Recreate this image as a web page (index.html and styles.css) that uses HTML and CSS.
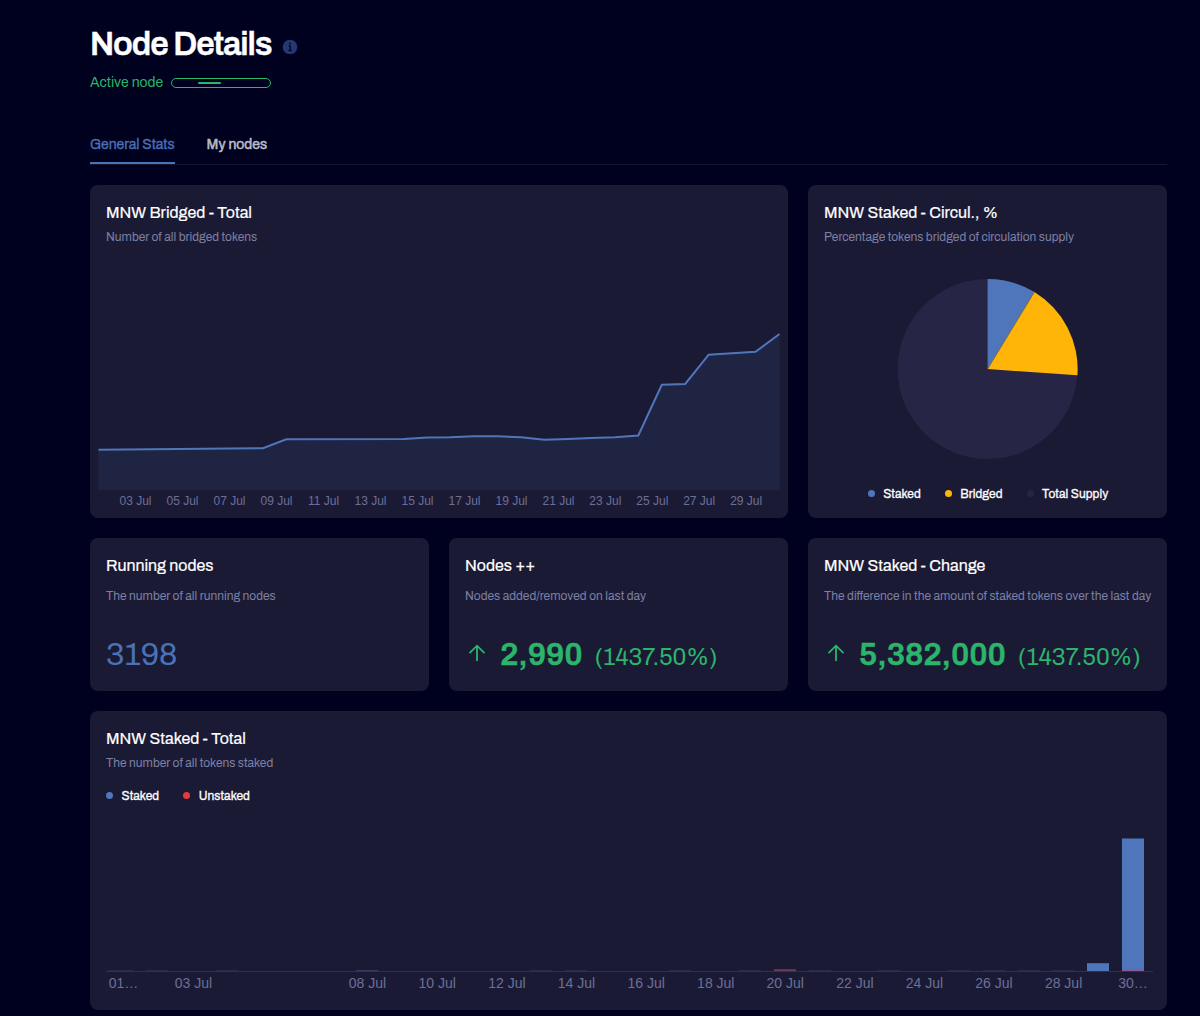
FILE: index.html
```html
<!DOCTYPE html>
<html lang="en">
<head>
  <meta charset="UTF-8">
  <meta name="viewport" content="width=device-width, initial-scale=1.0">
  <title>Node Details</title>
  <link rel="stylesheet" href="styles.css">
</head>
<body>
  <main class="container">
    <header class="page-header">
      <h1>Node Details</h1>
      <svg class="info-icon" width="16" height="16" viewBox="0 0 16 16">
        <circle cx="8" cy="8" r="7.3" fill="#263872"/>
        <circle cx="8" cy="4.6" r="1" fill="#060828"/>
        <path d="M6.6 7h1.6v4.4M6.4 11.5h3.4" fill="none" stroke="#060828" stroke-width="1.3"/>
      </svg>
    </header>
    <div class="status">
      <span>Active node</span>
      <div class="status-bar"><div class="status-progress"></div></div>
    </div>

    <nav class="tabs">
      <a class="tab active">General Stats</a>
      <a class="tab">My nodes</a>
    </nav>

    <div class="grid">
      <section class="card card-bridged">
        <h2>MNW Bridged - Total</h2>
        <p class="subtitle">Number of all bridged tokens</p>
        <svg class="area-chart" width="698" height="264" viewBox="90 253 698 264">
          <path class="area" d="M98.5 490V449.7L263 448.2L286.3 439.3L404 439L427 437.6L450 437.2L474 436.2L497.5 436.3L521 437.2L544.4 439.8L568 439L591 437.9L615 437.3L638.3 435.5L661.8 384.8L685.2 384L708.7 354.7L732 353.2L755.6 351.8L779.5 334V490Z"/>
          <path class="line" d="M98.5 449.7L263 448.2L286.3 439.3L404 439L427 437.6L450 437.2L474 436.2L497.5 436.3L521 437.2L544.4 439.8L568 439L591 437.9L615 437.3L638.3 435.5L661.8 384.8L685.2 384L708.7 354.7L732 353.2L755.6 351.8L779.5 334"/>
          <g class="axis">
            <text x="135.5" y="504.5">03 Jul</text>
            <text x="182.5" y="504.5">05 Jul</text>
            <text x="229.5" y="504.5">07 Jul</text>
            <text x="276.5" y="504.5">09 Jul</text>
            <text x="323.5" y="504.5">11 Jul</text>
            <text x="370.5" y="504.5">13 Jul</text>
            <text x="417.5" y="504.5">15 Jul</text>
            <text x="464.5" y="504.5">17 Jul</text>
            <text x="511.5" y="504.5">19 Jul</text>
            <text x="558.5" y="504.5">21 Jul</text>
            <text x="605.3" y="504.5">23 Jul</text>
            <text x="652.3" y="504.5">25 Jul</text>
            <text x="699.2" y="504.5">27 Jul</text>
            <text x="746.2" y="504.5">29 Jul</text>
          </g>
        </svg>
      </section>

      <section class="card card-pie">
        <h2>MNW Staked - Circul., %</h2>
        <p class="subtitle">Percentage tokens bridged of circulation supply</p>
        <svg class="pie" width="182" height="182" viewBox="-90.6 -91 182 182">
          <circle r="90" fill="#262545"/>
          <path d="M0 0V-90A90 90 0 0 1 46.8 -76.9Z" fill="#4f76ba"/>
          <path d="M0 0L46.8 -76.9A90 90 0 0 1 89.8 6.3Z" fill="#ffb508"/>
          <path d="M0 0L46.8 -76.9" stroke="#7d6c45" stroke-width="0.8"/>
        </svg>
        <ul class="legend legend-center">
          <li><i class="dot blue"></i>Staked</li>
          <li><i class="dot yellow"></i>Bridged</li>
          <li><i class="dot muted"></i>Total Supply</li>
        </ul>
      </section>

      <section class="card card-stat">
        <h2>Running nodes</h2>
        <p class="subtitle">The number of all running nodes</p>
        <div class="value value-blue">3198</div>
      </section>

      <section class="card card-stat">
        <h2>Nodes ++</h2>
        <p class="subtitle">Nodes added/removed on last day</p>
        <div class="value value-green">
          <svg class="arrow" width="24" height="24" viewBox="0 0 24 24"><path d="M12 20V5M4.5 12.2L12 4.7L19.5 12.2"/></svg>
          <strong>2,990</strong>
          <span class="percent">(1437.50%)</span>
        </div>
      </section>

      <section class="card card-stat">
        <h2>MNW Staked - Change</h2>
        <p class="subtitle">The difference in the amount of staked tokens over the last day</p>
        <div class="value value-green">
          <svg class="arrow" width="24" height="24" viewBox="0 0 24 24"><path d="M12 20V5M4.5 12.2L12 4.7L19.5 12.2"/></svg>
          <strong>5,382,000</strong>
          <span class="percent">(1437.50%)</span>
        </div>
      </section>

      <section class="card card-staked">
        <h2>MNW Staked - Total</h2>
        <p class="subtitle">The number of all tokens staked</p>
        <ul class="legend">
          <li><i class="dot blue"></i>Staked</li>
          <li><i class="dot red"></i>Unstaked</li>
        </ul>
        <svg class="bar-chart" width="1077" height="190" viewBox="90 820 1077 190">
          <path d="M106 971.5H1153" stroke="#2f2f55"/>
          <g fill="#29294c">
            <rect x="108" y="970" width="25" height="1"/>
            <rect x="146" y="970" width="22" height="1"/>
            <rect x="216" y="970" width="22" height="1"/>
            <rect x="530" y="970" width="22" height="1"/>
            <rect x="565" y="970" width="22" height="1"/>
            <rect x="669" y="970" width="22" height="1"/>
            <rect x="739" y="970" width="22" height="1"/>
            <rect x="809" y="970" width="22" height="1"/>
            <rect x="878" y="970" width="22" height="1"/>
            <rect x="948" y="970" width="22" height="1"/>
            <rect x="983" y="970" width="22" height="1"/>
            <rect x="1018" y="970" width="22" height="1"/>
            <rect x="1052" y="970" width="22" height="1"/>
          </g>
          <rect x="356" y="970" width="22" height="1" fill="#3a3a66"/>
          <rect x="774" y="969.3" width="22" height="1.7" fill="#713c62"/>
          <rect x="1087" y="963.2" width="22" height="7.8" fill="#4f76ba"/>
          <rect x="1122" y="838.5" width="22" height="132.5" fill="#4f76ba"/>
          <rect x="1122" y="969" width="22" height="2" fill="#8b5c91"/>
          <g class="axis axis-large">
            <text x="123.5" y="988">01…</text>
            <text x="193.5" y="988">03 Jul</text>
            <text x="367.5" y="988">08 Jul</text>
            <text x="437.2" y="988">10 Jul</text>
            <text x="507" y="988">12 Jul</text>
            <text x="576.5" y="988">14 Jul</text>
            <text x="646.2" y="988">16 Jul</text>
            <text x="715.8" y="988">18 Jul</text>
            <text x="785.2" y="988">20 Jul</text>
            <text x="855" y="988">22 Jul</text>
            <text x="924.5" y="988">24 Jul</text>
            <text x="994" y="988">26 Jul</text>
            <text x="1063.6" y="988">28 Jul</text>
            <text x="1133" y="988">30…</text>
          </g>
        </svg>
      </section>
    </div>
  </main>
</body>
</html>
```

FILE: styles.css
```css
* {
  box-sizing: border-box;
}

body {
  margin: 0;
  background-color: #00001f;
  color: #fff;
  font-family: Archivo, "Liberation Sans", Arial, sans-serif;
  font-size: 14px;
}

h1, h2, p, ul {
  margin: 0;
  padding: 0;
}

svg {
  display: block;
  flex: none;
}

.container {
  width: 1077px;
  margin-left: 90px;
  padding-top: 24px;
}

/* Header */
.page-header {
  display: flex;
  align-items: center;
  gap: 10px;
  height: 40px;
}

h1 {
  font-size: 33px;
  font-weight: 600;
  line-height: 40px;
  letter-spacing: -1.05px;
  -webkit-text-stroke: 0.4px currentColor;
}

.info-icon {
  margin-top: 6px;
}

.status {
  display: flex;
  align-items: center;
  gap: 8px;
  height: 20px;
  margin-top: 8px;
  color: #27b768;
}

.status-bar {
  width: 100px;
  height: 10px;
  margin-top: 1px;
  padding: 3px 26px;
  border: 1px solid #27b768;
  border-radius: 5px;
}

.status-progress {
  width: 23px;
  height: 2px;
  border-radius: 1px;
  background-color: #27b768;
}

/* Tabs */
.tabs {
  display: flex;
  gap: 32px;
  height: 30.4px;
  margin-top: 42.6px;
  border-bottom: 1px solid #14152f;
}

.tab {
  height: 29.4px;
  line-height: 20px;
  color: #bdbdc6;
  -webkit-text-stroke: 0.5px currentColor;
}

.tab.active {
  border-bottom: 2px solid #4a72b8;
  color: #4a72b8;
  letter-spacing: -0.04px;
  -webkit-text-stroke-width: 0.3px;
}

/* Cards */
.grid {
  display: grid;
  grid-template-columns: 339px 339px 359px;
  grid-template-rows: 333px 152.5px 299px;
  gap: 20px;
  margin-top: 20.4px;
  padding-bottom: 6px;
}

.card {
  display: flex;
  flex-direction: column;
  padding: 16px;
  border-radius: 8px;
  background-color: #1b1a35;
}

.card-bridged {
  grid-column: span 2;
}

.card-staked {
  grid-column: span 3;
}

h2 {
  font-size: 16px;
  font-weight: 400;
  line-height: 24px;
  -webkit-text-stroke: 0.2px currentColor;
}

.subtitle {
  margin-top: 4px;
  color: #7c80a4;
  font-size: 12px;
  line-height: 16px;
  white-space: nowrap;
}

.area-chart {
  margin: 8px -16px -16px;
}

.area {
  fill: #202443;
}

.line {
  fill: none;
  stroke: #4f76ba;
  stroke-width: 2;
}

.axis {
  fill: #6b7096;
  font-family: "Liberation Sans", Arial, sans-serif;
  font-size: 12px;
  text-anchor: middle;
}

.axis-large {
  font-size: 14px;
}

.pie {
  margin: 32.4px auto 0;
}

/* Legend */
.legend {
  display: flex;
  gap: 24px;
  margin-top: 16px;
  list-style: none;
  font-size: 12px;
  line-height: 18px;
  letter-spacing: 0.05px;
  -webkit-text-stroke: 0.3px currentColor;
}

.legend-center {
  justify-content: center;
  margin-top: 25px;
  padding-left: 1px;
}

.legend li {
  display: flex;
  align-items: center;
}

.dot {
  width: 7px;
  height: 7px;
  margin-right: 8.5px;
  border-radius: 50%;
}

.blue {
  background-color: #4f76ba;
}

.yellow {
  background-color: #ffb508;
}

.red {
  background-color: #e5383f;
}

.muted {
  background-color: #262545;
}

/* Stat cards */
.card-stat .subtitle {
  margin-top: 10px;
}

.value {
  display: flex;
  align-items: baseline;
  margin-top: 31px;
  font-size: 32px;
  line-height: 40px;
  letter-spacing: -0.1px;
}

.value-blue {
  color: #4a72b8;
}

.value-green {
  color: #2bb56b;
}

.arrow {
  align-self: flex-start;
  margin: 6px 11px 0 0;
  fill: none;
  stroke: currentColor;
  stroke-width: 1.8;
}

.value strong {
  font-weight: 600;
  letter-spacing: -0.15px;
  -webkit-text-stroke: 0.4px currentColor;
}

.percent {
  margin-left: 12px;
  font-size: 24px;
}

.bar-chart {
  margin: 15px -16px -16px;
}
```
